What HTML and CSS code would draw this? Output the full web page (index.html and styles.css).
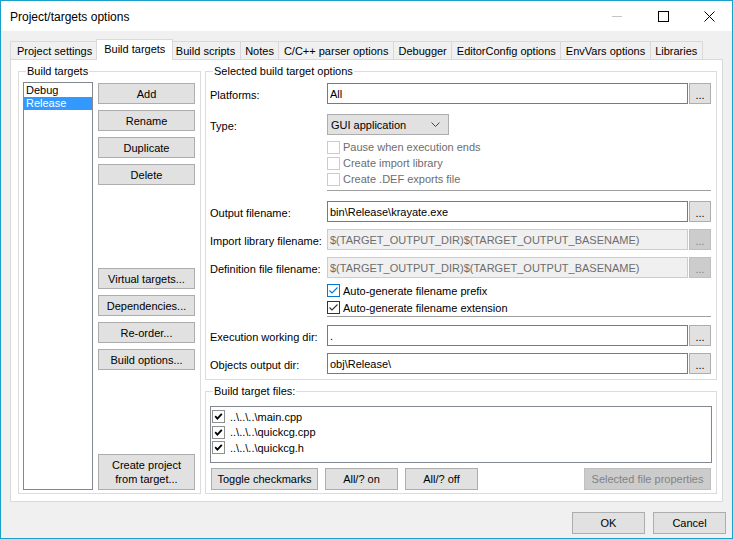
FILE: index.html
```html
<!DOCTYPE html>
<html>
<head>
<meta charset="utf-8">
<link rel="stylesheet" href="styles.css">
</head>
<body>
<div class="window">
  <div class="titlebar">
    <span class="title">Project/targets options</span>
    <div class="caps">
      <div class="cap"><svg width="10" height="10" viewBox="0 0 10 10"><line x1="0" y1="5.5" x2="10" y2="5.5" stroke="#c4c4c4" stroke-width="1"/></svg></div>
      <div class="cap"><svg width="11" height="11" viewBox="0 0 11 11"><rect x="0.5" y="0.5" width="10" height="10" fill="none" stroke="#000" stroke-width="1"/></svg></div>
      <div class="cap"><svg width="11" height="11" viewBox="0 0 11 11"><path d="M0.5 0.5 L10.5 10.5 M10.5 0.5 L0.5 10.5" stroke="#000" stroke-width="1"/></svg></div>
    </div>
  </div>
  <div class="client">
    <div class="tabs">
      <div class="tab">Project settings</div>
      <div class="tab active">Build targets</div>
      <div class="tab">Build scripts</div>
      <div class="tab">Notes</div>
      <div class="tab">C/C++ parser options</div>
      <div class="tab">Debugger</div>
      <div class="tab">EditorConfig options</div>
      <div class="tab">EnvVars options</div>
      <div class="tab">Libraries</div>
    </div>
    <div class="panel">
      <div class="group targets">
        <span class="gtitle">Build targets</span>
        <div class="tlist">
          <div class="titem">Debug</div>
          <div class="titem sel">Release</div>
        </div>
        <div class="tbtns">
          <div class="btn">Add</div>
          <div class="btn">Rename</div>
          <div class="btn">Duplicate</div>
          <div class="btn">Delete</div>
          <div class="btn gap-big">Virtual targets...</div>
          <div class="btn">Dependencies...</div>
          <div class="btn">Re-order...</div>
          <div class="btn">Build options...</div>
          <div class="btn tall">Create project<br>from target...</div>
        </div>
      </div>
      <div class="rightcol">
        <div class="group opts">
          <span class="gtitle">Selected build target options</span>
          <div class="row first">
            <div class="lbl">Platforms:</div>
            <div class="field">All</div>
            <div class="dots">...</div>
          </div>
          <div class="row sel-row">
            <div class="lbl">Type:</div>
            <div class="select">GUI application<svg class="chev" width="9" height="5" viewBox="0 0 9 5"><polyline points="0.5,0.5 4.5,4.5 8.5,0.5" fill="none" stroke="#444" stroke-width="1"/></svg></div>
          </div>
          <div class="cbgroup dis-group">
            <div class="cbrow dis"><span class="cb"></span>Pause when execution ends</div>
            <div class="cbrow dis"><span class="cb"></span>Create import library</div>
            <div class="cbrow dis"><span class="cb"></span>Create .DEF exports file</div>
          </div>
          <div class="sep sep1"></div>
          <div class="row out-row">
            <div class="lbl">Output filename:</div>
            <div class="field">bin\Release\krayate.exe</div>
            <div class="dots">...</div>
          </div>
          <div class="row next">
            <div class="lbl">Import library filename:</div>
            <div class="field disabled">$(TARGET_OUTPUT_DIR)$(TARGET_OUTPUT_BASENAME)</div>
            <div class="dots disabled">...</div>
          </div>
          <div class="row next">
            <div class="lbl">Definition file filename:</div>
            <div class="field disabled">$(TARGET_OUTPUT_DIR)$(TARGET_OUTPUT_BASENAME)</div>
            <div class="dots disabled">...</div>
          </div>
          <div class="cbgroup auto-group">
            <div class="cbrow tall17"><span class="cb on focus"><svg width="11" height="11" viewBox="0 0 11 11"><polyline points="1.5,5.5 4,8 9.5,2.5" fill="none" stroke="#0078d7" stroke-width="1.1"/></svg></span>Auto-generate filename prefix</div>
            <div class="cbrow tall17"><span class="cb on"><svg width="11" height="11" viewBox="0 0 11 11"><polyline points="1.5,5.5 4,8 9.5,2.5" fill="none" stroke="#333" stroke-width="1.1"/></svg></span>Auto-generate filename extension</div>
          </div>
          <div class="sep"></div>
          <div class="row exec-row">
            <div class="lbl">Execution working dir:</div>
            <div class="field">.</div>
            <div class="dots">...</div>
          </div>
          <div class="row next">
            <div class="lbl">Objects output dir:</div>
            <div class="field">obj\Release\</div>
            <div class="dots">...</div>
          </div>
        </div>
        <div class="group files">
          <span class="gtitle">Build target files:</span>
          <div class="flist">
            <div class="fitem"><span class="fcb"><svg width="11" height="11" viewBox="0 0 11 11"><polyline points="2.2,5.2 4.4,7.6 8.8,2.8" fill="none" stroke="#000" stroke-width="1.8"/></svg></span>..\..\..\main.cpp</div>
            <div class="fitem"><span class="fcb"><svg width="11" height="11" viewBox="0 0 11 11"><polyline points="2.2,5.2 4.4,7.6 8.8,2.8" fill="none" stroke="#000" stroke-width="1.8"/></svg></span>..\..\..\quickcg.cpp</div>
            <div class="fitem"><span class="fcb"><svg width="11" height="11" viewBox="0 0 11 11"><polyline points="2.2,5.2 4.4,7.6 8.8,2.8" fill="none" stroke="#000" stroke-width="1.8"/></svg></span>..\..\..\quickcg.h</div>
          </div>
          <div class="fbtns">
            <div class="btn w-toggle">Toggle checkmarks</div>
            <div class="btn w-all">All/? on</div>
            <div class="btn w-all">All/? off</div>
            <div class="btn w-props disabled">Selected file properties</div>
          </div>
        </div>
      </div>
    </div>
    <div class="footer">
      <div class="btn w-ok">OK</div>
      <div class="btn w-ok">Cancel</div>
    </div>
  </div>
</div>
</body>
</html>
```
FILE: styles.css
```css
* { box-sizing: border-box; }
html, body { margin: 0; padding: 0; background: #f0f0f0; }
body {
  font-family: "Liberation Sans", Arial, sans-serif;
  font-size: 11px;
  color: #000;
}
.window {
  width: 733px;
  height: 539px;
  border: 1px solid #1a9fcb;
  background: #f0f0f0;
  display: flex;
  flex-direction: column;
  overflow: hidden;
}
.titlebar {
  height: 30px;
  flex: none;
  background: #fff;
  display: flex;
  align-items: center;
  padding-left: 9px;
}
.title { font-size: 12px; flex: 1; padding-top: 1px; }
.caps { display: flex; height: 30px; }
.cap {
  width: 46px;
  height: 30px;
  display: flex;
  align-items: center;
  justify-content: center;
}
.cap svg { display: block; }

.client {
  flex: 1;
  display: flex;
  flex-direction: column;
}
.tabs {
  height: 28px;
  padding: 8px 0 0 9px;
  display: flex;
  align-items: flex-end;
  flex: none;
}
.tab {
  height: 18px;
  border: 1px solid #d9d9d9;
  border-bottom: 0;
  margin-left: -1px;
  padding: 0 4.5px;
  display: flex;
  align-items: center;
  background: #f0f0f0;
  white-space: nowrap;
  position: relative;
}
.tab:first-child { margin-left: 0; padding-left: 6px; padding-right: 5px; }
.tab.active {
  height: 21px;
  margin-bottom: -1px;
  margin-left: -2px;
  margin-right: -2px;
  padding: 0 7px 2px 7px;
  background: #fff;
  z-index: 2;
}

.panel {
  margin: 0 9px;
  height: 443px;
  flex: none;
  background: #fff;
  border: 1px solid #d9d9d9;
  padding: 11px 5px 7px 7px;
  display: flex;
  gap: 4px;
  position: relative;
  z-index: 1;
}
.group {
  position: relative;
  border: 1px solid #dcdcdc;
}
.gtitle {
  position: absolute;
  top: -8px;
  left: 7px;
  background: #fff;
  padding: 0 1px;
  line-height: 14px;
  white-space: nowrap;
}
.targets {
  width: 183px;
  height: 423px;
  display: flex;
  padding: 10px 5px 3px 4px;
  gap: 5px;
}
.tlist {
  width: 70px;
  height: 408px;
  border: 1px solid #828790;
  padding: 1px 0 0 0;
  background: #fff;
}
.titem {
  height: 13px;
  line-height: 13px;
  padding-left: 2px;
}
.titem.sel { background: #3399ff; color: #fff; }
.tbtns {
  flex: 1;
  display: flex;
  flex-direction: column;
  padding-top: 1px;
  gap: 6px;
}
.btn {
  height: 21px;
  background: #e1e1e1;
  border: 1px solid #adadad;
  display: flex;
  align-items: center;
  justify-content: center;
  text-align: center;
  white-space: nowrap;
  flex: none;
}
.btn.disabled { background: #cccccc; border-color: #bfbfbf; color: #838383; }
.tbtns .gap-big { margin-top: 77px; }
.tbtns .tall { height: 36px; margin-top: auto; line-height: 14px; }

.rightcol {
  width: 512px;
  display: flex;
  flex-direction: column;
  gap: 11px;
}
.opts {
  height: 309px;
  padding: 11px 5px 5px 4px;
}
.row {
  display: flex;
  align-items: center;
  height: 21px;
}
.row .lbl { width: 117px; flex: none; white-space: nowrap; padding-top: 2px; }
.field {
  width: 361px;
  height: 21px;
  border: 1px solid #7a7a7a;
  padding-left: 2px;
  display: flex;
  align-items: center;
  white-space: nowrap;
  overflow: hidden;
  background: #fff;
}
.field.disabled { background: #f0f0f0; border-color: #cccccc; color: #6d6d6d; }
.dots {
  width: 22px;
  height: 21px;
  margin-left: 1px;
  background: #e1e1e1;
  border: 1px solid #adadad;
  display: flex;
  align-items: center;
  justify-content: center;
  padding-top: 3px;
}
.dots.disabled { background: #cccccc; border-color: #bfbfbf; color: #838383; }
.sel-row { margin-top: 10px; }
.select {
  width: 122px;
  height: 21px;
  background: #e1e1e1;
  border: 1px solid #adadad;
  display: flex;
  align-items: center;
  justify-content: space-between;
  padding: 0 8px 0 3px;
}
.chev { display: block; }
.cbgroup { padding-left: 117px; }
.dis-group { margin-top: 4px; }
.cbrow {
  height: 16px;
  display: flex;
  align-items: center;
  white-space: nowrap;
}
.cbrow.tall17 { height: 17px; }
.cb {
  width: 13px;
  height: 13px;
  border: 1px solid #333;
  background: #fff;
  margin-right: 3px;
  flex: none;
  display: flex;
  align-items: center;
  justify-content: center;
}
.cb svg { display: block; }
.cb.focus { border-color: #0078d7; }
.cbrow.dis { color: #6d6d6d; }
.cbrow.dis .cb { border-color: #cccccc; }
.sep {
  height: 1px;
  background: #a0a0a0;
  margin-left: 117px;
}
.sep1 { margin-top: 3px; }
.out-row { margin-top: 10px; }
.row.next { margin-top: 7px; }
.auto-group { margin-top: 4px; }
.exec-row { margin-top: 8px; }

.files {
  height: 103px;
  padding: 14px 4px 3px 4px;
}
.flist {
  height: 57px;
  border: 1px solid #828790;
  background: #fff;
  padding: 2px 0 0 1px;
}
.fitem {
  height: 15.5px;
  display: flex;
  align-items: center;
  white-space: nowrap;
}
.fcb {
  width: 13px;
  height: 13px;
  border: 1px solid #8e8f8f;
  background: #fff;
  margin-right: 5px;
  display: flex;
  align-items: center;
  justify-content: center;
  flex: none;
}
.fcb svg { display: block; }
.fbtns {
  margin-top: 5px;
  display: flex;
  gap: 7px;
  padding-left: 1px;
}
.fbtns .btn { height: 22px; }
.w-toggle { width: 107px; }
.w-all { width: 73px; }
.w-props { width: 127px; margin-left: auto; margin-right: 1px; }

.footer {
  margin-top: 10px;
  display: flex;
  justify-content: flex-end;
  gap: 8px;
  padding-right: 6px;
}
.footer .btn { height: 22px; }
.w-ok { width: 73px; }
```
